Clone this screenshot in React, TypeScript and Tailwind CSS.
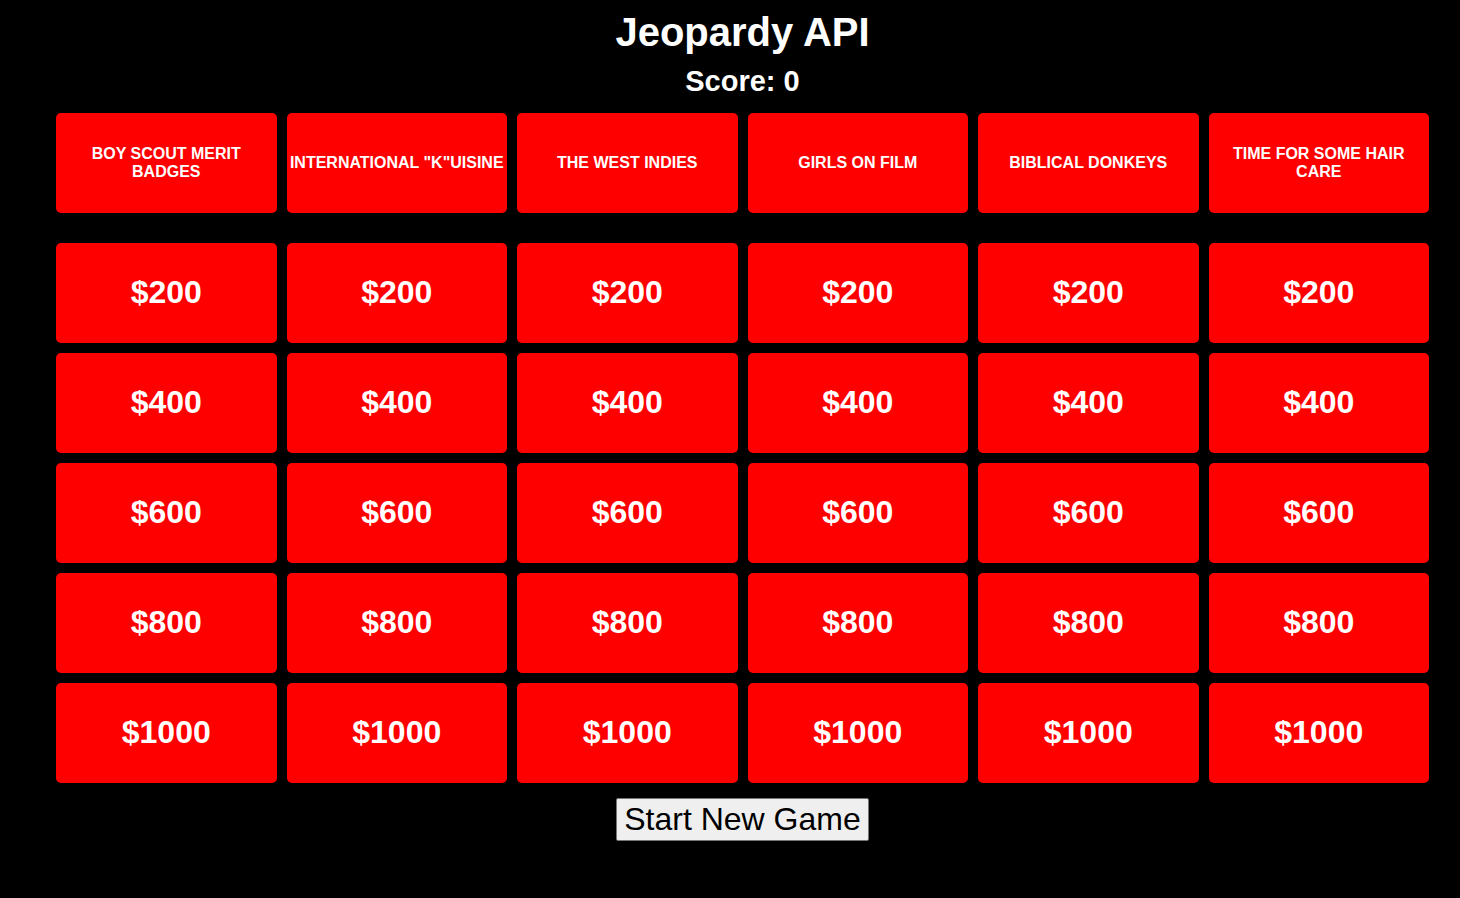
import { useState } from "react";

const categories = [
  "BOY SCOUT MERIT BADGES",
  'INTERNATIONAL "K"UISINE',
  "THE WEST INDIES",
  "GIRLS ON FILM",
  "BIBLICAL DONKEYS",
  "TIME FOR SOME HAIR CARE",
];
const values = [200, 400, 600, 800, 1000];

export default function App() {
  const [score, setScore] = useState(0);

  return (
    <main className="flex min-h-screen flex-col items-center bg-black pr-[31px] pl-14 pt-2 text-white font-['Liberation_Sans',Arial,sans-serif]">
      <h1 className="text-[40px] leading-12 font-bold">Jeopardy API</h1>
      <h2 className="mt-2 text-[29px] leading-[34px] font-bold">Score: {score}</h2>
      <div className="mt-[15px] grid w-full grid-cols-6 gap-[10px]">
        {categories.map((category) => (
          <h3
            key={category}
            className="mb-5 flex h-[100px] items-center justify-center rounded-[5px] bg-[#ff0000] text-center text-base leading-[18px] font-bold"
          >
            {category}
          </h3>
        ))}
        {values.map((value) =>
          categories.map((category) => (
            <button
              key={`${category}-${value}`}
              type="button"
              aria-label={`${category} for $${value}`}
              onClick={() => setScore(score + value)}
              className="h-[100px] rounded-[5px] bg-[#ff0000] pb-0.5 text-[32px] leading-9 font-bold"
            >
              ${value}
            </button>
          ))
        )}
      </div>
      <button
        type="button"
        onClick={() => setScore(0)}
        className="mt-[15px] rounded-[2px] border border-[#767676] bg-[#efefef] px-[7px] py-0.5 text-[32px] leading-[37px] text-black"
      >
        Start New Game
      </button>
    </main>
  );
}
